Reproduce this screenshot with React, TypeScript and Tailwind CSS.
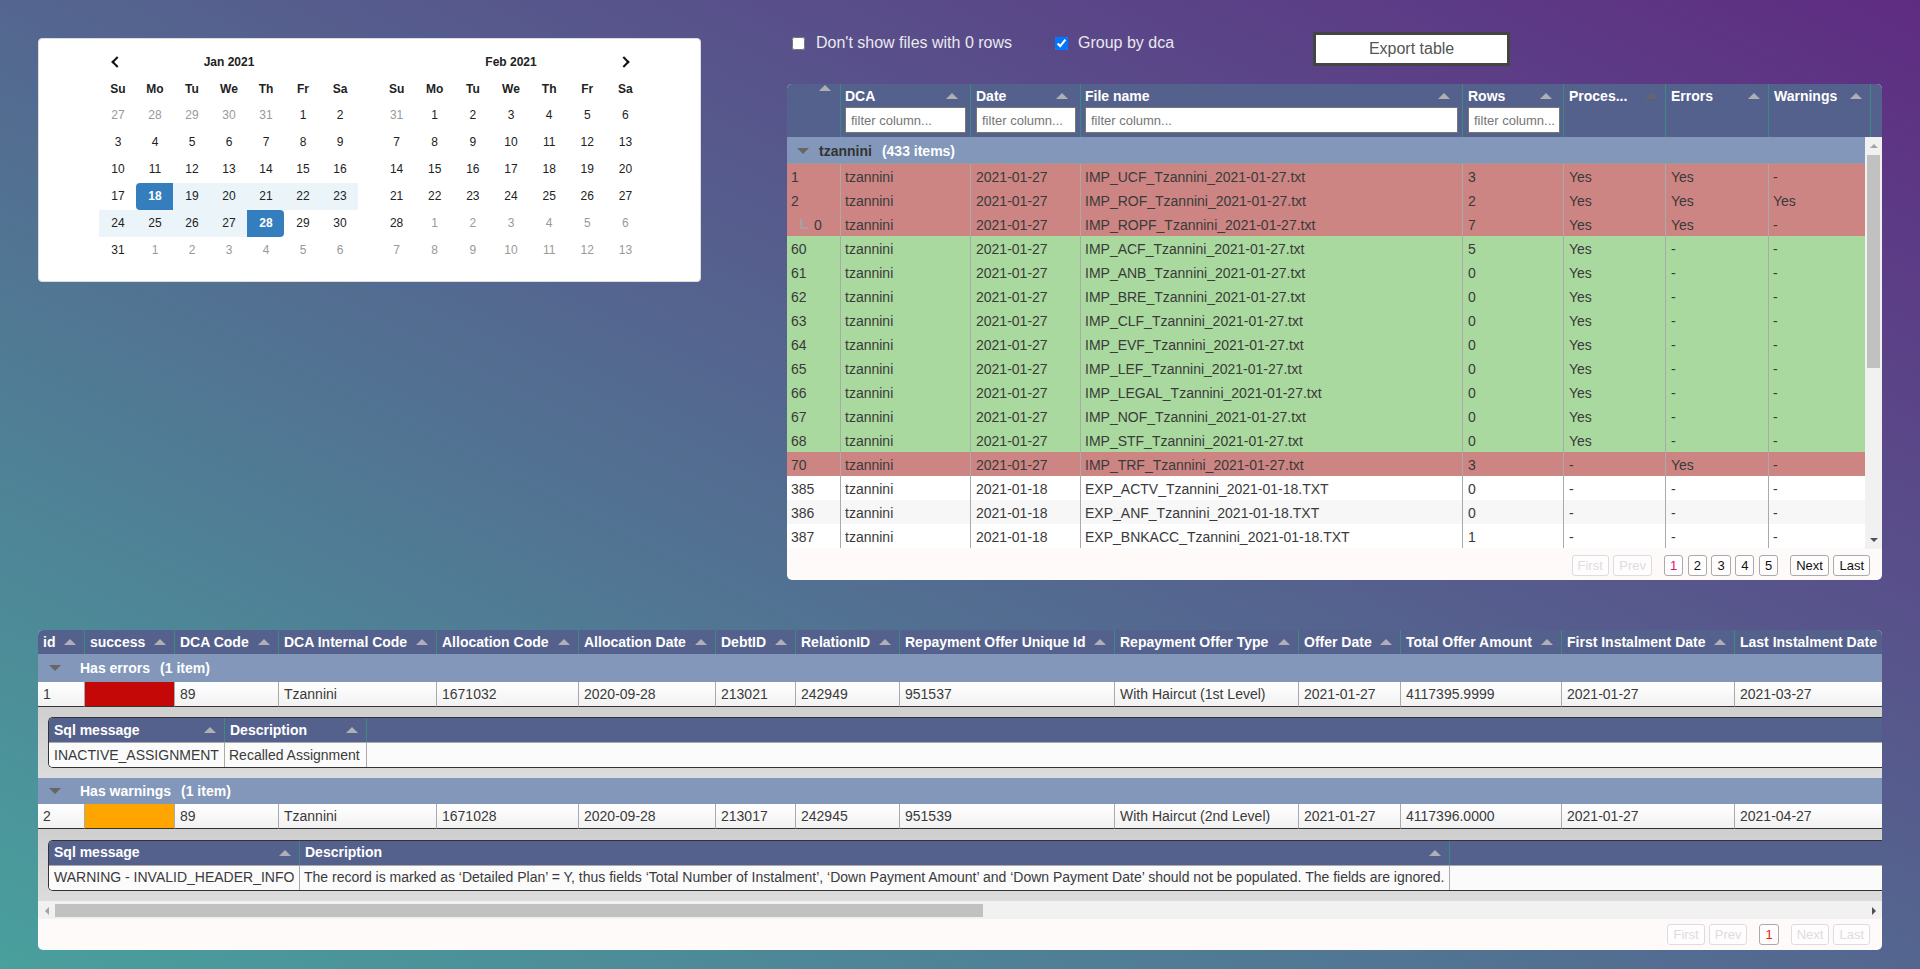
import type { ReactNode } from 'react'

const janDays = [
  [27, 28, 29, 30, 31, 1, 2],
  [3, 4, 5, 6, 7, 8, 9],
  [10, 11, 12, 13, 14, 15, 16],
  [17, 18, 19, 20, 21, 22, 23],
  [24, 25, 26, 27, 28, 29, 30],
  [31, 1, 2, 3, 4, 5, 6],
]

const febDays = [
  [31, 1, 2, 3, 4, 5, 6],
  [7, 8, 9, 10, 11, 12, 13],
  [14, 15, 16, 17, 18, 19, 20],
  [21, 22, 23, 24, 25, 26, 27],
  [28, 1, 2, 3, 4, 5, 6],
  [7, 8, 9, 10, 11, 12, 13],
]

const weekdays = ['Su', 'Mo', 'Tu', 'We', 'Th', 'Fr', 'Sa']

type FileRow = {
  id: string
  date: string
  file: string
  rows: string
  processed: string
  errors: string
  warnings: string
  tone: 'red' | 'green' | 'white' | 'grey'
  child?: boolean
}

const fileRows: FileRow[] = [
  { id: '1', date: '2021-01-27', file: 'IMP_UCF_Tzannini_2021-01-27.txt', rows: '3', processed: 'Yes', errors: 'Yes', warnings: '-', tone: 'red' },
  { id: '2', date: '2021-01-27', file: 'IMP_ROF_Tzannini_2021-01-27.txt', rows: '2', processed: 'Yes', errors: 'Yes', warnings: 'Yes', tone: 'red' },
  { id: '0', date: '2021-01-27', file: 'IMP_ROPF_Tzannini_2021-01-27.txt', rows: '7', processed: 'Yes', errors: 'Yes', warnings: '-', tone: 'red', child: true },
  { id: '60', date: '2021-01-27', file: 'IMP_ACF_Tzannini_2021-01-27.txt', rows: '5', processed: 'Yes', errors: '-', warnings: '-', tone: 'green' },
  { id: '61', date: '2021-01-27', file: 'IMP_ANB_Tzannini_2021-01-27.txt', rows: '0', processed: 'Yes', errors: '-', warnings: '-', tone: 'green' },
  { id: '62', date: '2021-01-27', file: 'IMP_BRE_Tzannini_2021-01-27.txt', rows: '0', processed: 'Yes', errors: '-', warnings: '-', tone: 'green' },
  { id: '63', date: '2021-01-27', file: 'IMP_CLF_Tzannini_2021-01-27.txt', rows: '0', processed: 'Yes', errors: '-', warnings: '-', tone: 'green' },
  { id: '64', date: '2021-01-27', file: 'IMP_EVF_Tzannini_2021-01-27.txt', rows: '0', processed: 'Yes', errors: '-', warnings: '-', tone: 'green' },
  { id: '65', date: '2021-01-27', file: 'IMP_LEF_Tzannini_2021-01-27.txt', rows: '0', processed: 'Yes', errors: '-', warnings: '-', tone: 'green' },
  { id: '66', date: '2021-01-27', file: 'IMP_LEGAL_Tzannini_2021-01-27.txt', rows: '0', processed: 'Yes', errors: '-', warnings: '-', tone: 'green' },
  { id: '67', date: '2021-01-27', file: 'IMP_NOF_Tzannini_2021-01-27.txt', rows: '0', processed: 'Yes', errors: '-', warnings: '-', tone: 'green' },
  { id: '68', date: '2021-01-27', file: 'IMP_STF_Tzannini_2021-01-27.txt', rows: '0', processed: 'Yes', errors: '-', warnings: '-', tone: 'green' },
  { id: '70', date: '2021-01-27', file: 'IMP_TRF_Tzannini_2021-01-27.txt', rows: '3', processed: '-', errors: 'Yes', warnings: '-', tone: 'red' },
  { id: '385', date: '2021-01-18', file: 'EXP_ACTV_Tzannini_2021-01-18.TXT', rows: '0', processed: '-', errors: '-', warnings: '-', tone: 'white' },
  { id: '386', date: '2021-01-18', file: 'EXP_ANF_Tzannini_2021-01-18.TXT', rows: '0', processed: '-', errors: '-', warnings: '-', tone: 'grey' },
  { id: '387', date: '2021-01-18', file: 'EXP_BNKACC_Tzannini_2021-01-18.TXT', rows: '1', processed: '-', errors: '-', warnings: '-', tone: 'white' },
]

const toneClass = {
  red: 'bg-[#cc8583]',
  green: 'bg-[#a9d99e]',
  white: 'bg-white',
  grey: 'bg-[#f7f7f7]',
}

const offerHeads = [
  'id',
  'success',
  'DCA Code',
  'DCA Internal Code',
  'Allocation Code',
  'Allocation Date',
  'DebtID',
  'RelationID',
  'Repayment Offer Unique Id',
  'Repayment Offer Type',
  'Offer Date',
  'Total Offer Amount',
  'First Instalment Date',
  'Last Instalment Date',
]

const errorRow = ['89', 'Tzannini', '1671032', '2020-09-28', '213021', '242949', '951537', 'With Haircut (1st Level)', '2021-01-27', '4117395.9999', '2021-01-27', '2021-03-27']
const warningRow = ['89', 'Tzannini', '1671028', '2020-09-28', '213017', '242945', '951539', 'With Haircut (2nd Level)', '2021-01-27', '4117396.0000', '2021-01-27', '2021-04-27']

function SortUp({ dark }: { dark?: boolean }) {
  return (
    <span
      className={`block w-0 h-0 shrink-0 border-x-[6px] border-x-transparent border-b-[6px] ${dark ? 'border-b-[#666666]' : 'border-b-[#aeb0b4]'}`}
    />
  )
}

function CollapseArrow() {
  return <span className="block w-0 h-0 shrink-0 border-x-[6px] border-x-transparent border-t-[6px] border-t-[#666666]" />
}

function MonthGrid({ days, title, range, className }: { days: number[][]; title: string; range?: boolean; className: string }) {
  return (
    <div className={`grid grid-cols-7 auto-rows-[27px] items-center text-center text-[12px] text-[#222222] ${className}`}>
      <div className="flex justify-center">
        {range && <span className="block w-[8px] h-[8px] ml-[-2px] border-l-2 border-b-2 border-[#111111] rotate-45" />}
      </div>
      <div className="col-span-5 font-bold pl-[1px]">{title}</div>
      <div className="flex justify-center">
        {!range && <span className="block w-[8px] h-[8px] ml-[-2px] border-r-2 border-t-2 border-[#111111] rotate-45" />}
      </div>
      {weekdays.map((d) => (
        <div key={d} className="font-bold pl-[1px]">{d}</div>
      ))}
      {days.flatMap((week, w) =>
        week.map((d, i) => {
          const inMonth = w === 0 ? d < 20 : w >= 4 ? d > 20 : true
          let cell = inMonth ? '' : 'text-[#999999]'
          if (range && w === 3 && i === 1) cell = 'bg-[#357ebd] text-white font-bold rounded-l-[4px]'
          else if (range && w === 3 && i > 1) cell = 'bg-[#ebf4f8]'
          else if (range && w === 4 && i < 4) cell = 'bg-[#ebf4f8]'
          else if (range && w === 4 && i === 4) cell = 'bg-[#357ebd] text-white font-bold rounded-r-[4px]'
          return (
            <div key={`${w}-${i}`} className={`h-[27px] leading-[27px] pl-[1px] ${cell}`}>
              {d}
            </div>
          )
        }),
      )}
    </div>
  )
}

function FilterHead({ label, className }: { label: string; className: string }) {
  return (
    <th className={`p-0 align-top text-left font-bold border-r border-r-[#3a8a80] ${className}`}>
      <div className="flex items-center justify-between h-[23px] pt-[1px] pr-[8px]">
        <span className="whitespace-nowrap">{label}</span>
        <SortUp />
      </div>
      <input
        placeholder="filter column..."
        className="block w-full h-[26px] bg-white border border-[#777777] pl-[5px] pr-[2px] text-[13px] font-normal text-[#333333] placeholder:text-[#757575] text-ellipsis"
      />
    </th>
  )
}

function PlainHead({ label, dark }: { label: string; dark?: boolean }) {
  return (
    <th className="p-0 pl-[5px] align-top text-left font-bold border-r border-r-[#3a8a80]">
      <div className="flex items-center justify-between h-[23px] pt-[1px] pr-[8px]">
        <span className="whitespace-nowrap">{label}</span>
        <SortUp dark={dark} />
      </div>
    </th>
  )
}

function Td({ children, wide }: { children?: ReactNode; wide?: boolean }) {
  return (
    <td className={`h-[24px] p-0 pt-[2px] border-r border-r-[#aaaaaa] whitespace-nowrap overflow-hidden ${wide ? 'pl-[5px]' : 'pl-[4px]'}`}>
      {children}
    </td>
  )
}

function PageButton({ label, state }: { label: string; state?: 'off' | 'current' | 'currentRed' }) {
  const look =
    state === 'off'
      ? 'border-[#dddddd] text-[#dddddd]'
      : state === 'current'
        ? 'border-[#aaaaaa] text-[#e0107a]'
        : state === 'currentRed'
          ? 'border-[#aaaaaa] text-[#e8200c]'
          : 'border-[#aaaaaa] text-[#111111]'
  return (
    <button className={`h-[21px] px-[5px] border rounded-[3px] text-[13px] leading-none bg-[#fffdfd] ${look}`}>{label}</button>
  )
}

function OfferCell({ children, className = '' }: { children?: ReactNode; className?: string }) {
  return (
    <td className={`h-[25px] p-0 px-[5px] border-r border-r-[#aaaaaa] border-b border-b-[#333333] whitespace-nowrap ${className}`}>
      {children}
    </td>
  )
}

function OfferHead({ label }: { label: string }) {
  return (
    <th className="h-[24px] p-0 pl-[5px] pr-[8px] text-left font-bold text-white border-r border-r-[#3a8a80]">
      <div className="flex items-center justify-between">
        <span className="whitespace-nowrap">{label}</span>
        <SortUp />
      </div>
    </th>
  )
}

function SubTable({ cols, first, second }: { cols: ReactNode; first: string; second: string }) {
  return (
    <div className="border-y border-l border-[#333333] rounded-l-[5px] overflow-hidden">
      <table className="w-full table-fixed border-separate border-spacing-0">
        {cols}
        <thead>
          <tr className="bg-[#55618d]">
            <OfferHead label="Sql message" />
            <OfferHead label="Description" />
            <th className="h-[24px] p-0" />
          </tr>
        </thead>
        <tbody>
          <tr className="bg-[#fbfbfb]">
            <td className="h-[25px] p-0 pl-[5px] border-t border-t-[#aaaaaa] border-r border-r-[#aaaaaa] whitespace-nowrap">{first}</td>
            <td className="h-[25px] p-0 pl-[4px] border-t border-t-[#aaaaaa] border-r border-r-[#aaaaaa] whitespace-nowrap">{second}</td>
            <td className="h-[25px] p-0 border-t border-t-[#aaaaaa]" />
          </tr>
        </tbody>
      </table>
    </div>
  )
}

function GroupRow({ label, className }: { label: string; className: string }) {
  return (
    <tr className="bg-[#8297b9]">
      <td colSpan={14} className={`p-0 pl-[11px] ${className}`}>
        <div className="flex items-center font-bold text-white">
          <CollapseArrow />
          <span className="ml-[19px]">{label}</span>
          <span className="ml-[10px]">(1 item)</span>
        </div>
      </td>
    </tr>
  )
}

function OfferRow({ id, swatch, values }: { id: string; swatch: string; values: string[] }) {
  return (
    <tr className="bg-[linear-gradient(#ffffff,#f1f1f1)]">
      <OfferCell>{id}</OfferCell>
      <OfferCell className={swatch} />
      {values.map((v, i) => (
        <OfferCell key={i}>{v}</OfferCell>
      ))}
    </tr>
  )
}

function NestedRow({ className, children }: { className: string; children: ReactNode }) {
  return (
    <tr className="bg-[linear-gradient(#cfcfcf,#dcdcdc)]">
      <td colSpan={14} className={`p-0 pl-[10px] ${className}`}>
        {children}
      </td>
    </tr>
  )
}

export default function App() {
  return (
    <div className="w-[1920px] h-[969px] overflow-hidden pt-[32px] bg-[linear-gradient(to_top_right,#49a09d,#5f2c82)] font-['Liberation_Sans',Arial,sans-serif] text-[14px] text-[#3a3a3a]">
      <div className="flex items-start">
        {/* Date range picker */}
        <div className="ml-[38px] mt-[6px] w-[663px] h-[244px] flex gap-[19px] bg-white rounded-[4px] pl-[60px] pt-[9px] border border-[#dddddd]">
          <MonthGrid days={janDays} title="Jan 2021" range className="w-[259px]" />
          <MonthGrid days={febDays} title="Feb 2021" className="w-[267px]" />
        </div>

        <div className="ml-[86px] w-[1095px]">
          {/* Controls */}
          <div className="flex items-center h-[34px] mb-[18px]">
            <input type="checkbox" readOnly className="ml-[5px] mb-[12px] w-[13px] h-[13px]" />
            <span className="ml-[11px] mb-[12px] text-[16px] text-[#e9e9ee]">Don't show files with 0 rows</span>
            <input type="checkbox" checked readOnly className="ml-[43px] mb-[12px] w-[13px] h-[13px]" />
            <span className="ml-[10px] mb-[12px] text-[16px] text-[#e9e9ee]">Group by dca</span>
            <button className="ml-[139px] w-[197px] h-[34px] bg-white border-[3px] border-[#444444] text-[16px] text-[#555555]">
              Export table
            </button>
          </div>

          {/* Files table */}
          <div className="h-[496px] rounded-[5px] overflow-hidden bg-[#fffafa]">
            <table className="w-[1095px] table-fixed border-separate border-spacing-0 text-white">
              <colgroup>
                <col className="w-[54px]" />
                <col className="w-[130px]" />
                <col className="w-[110px]" />
                <col className="w-[382px]" />
                <col className="w-[101px]" />
                <col className="w-[102px]" />
                <col className="w-[103px]" />
                <col className="w-[102px]" />
                <col />
              </colgroup>
              <thead>
                <tr className="bg-[#55618d] h-[53px]">
                  <th className="p-0 align-top border-r border-r-[#3a8a80]">
                    <div className="flex justify-end pr-[9px] pt-[1px]">
                      <SortUp />
                    </div>
                  </th>
                  <FilterHead label="DCA" className="pl-[4px] pr-[4px]" />
                  <FilterHead label="Date" className="pl-[5px] pr-[4px]" />
                  <FilterHead label="File name" className="pl-[4px] pr-[4px]" />
                  <FilterHead label="Rows" className="pl-[5px] pr-[3px]" />
                  <PlainHead label="Proces..." dark />
                  <PlainHead label="Errors" />
                  <PlainHead label="Warnings" />
                  <th className="p-0" />
                </tr>
              </thead>
            </table>
            <div className="flex h-[412px]">
              <table className="w-[1078px] h-fit table-fixed border-separate border-spacing-0">
                <colgroup>
                  <col className="w-[54px]" />
                  <col className="w-[130px]" />
                  <col className="w-[110px]" />
                  <col className="w-[382px]" />
                  <col className="w-[101px]" />
                  <col className="w-[102px]" />
                  <col className="w-[103px]" />
                  <col />
                </colgroup>
                <tbody>
                  <tr className="bg-[#8297b9]">
                    <td colSpan={8} className="h-[27px] p-0 pt-[2px] pl-[10px] border-b border-b-[#9a9a9a]">
                      <div className="flex items-center font-bold">
                        <CollapseArrow />
                        <span className="ml-[10px] text-[#333333]">tzannini</span>
                        <span className="ml-[10px] text-white">(433 items)</span>
                      </div>
                    </td>
                  </tr>
                  {fileRows.map((r) => (
                    <tr key={r.id} className={toneClass[r.tone]}>
                      <Td>
                        {r.child ? (
                          <span className="flex items-center pl-[9px]">
                            <span className="block w-[8px] h-[10px] mb-[3px] border-l-2 border-b-2 border-[#a6a3a8]" />
                            <span className="ml-[6px]">{r.id}</span>
                          </span>
                        ) : (
                          r.id
                        )}
                      </Td>
                      <Td>tzannini</Td>
                      <Td wide>{r.date}</Td>
                      <Td>{r.file}</Td>
                      <Td wide>{r.rows}</Td>
                      <Td wide>{r.processed}</Td>
                      <Td wide>{r.errors}</Td>
                      <td className="h-[24px] p-0 pt-[2px] px-[4px]">{r.warnings}</td>
                    </tr>
                  ))}
                </tbody>
              </table>
              <div className="w-[17px] bg-[#f1f1f1] flex flex-col items-center">
                <div className="h-[18px] flex items-center justify-center">
                  <span className="block w-0 h-0 border-x-[4px] border-x-transparent border-b-[4px] border-b-[#a3a3a3]" />
                </div>
                <div className="w-[13px] h-[213px] bg-[#c1c1c1]" />
                <div className="mt-auto h-[18px] flex items-center justify-center">
                  <span className="block w-0 h-0 border-x-[4px] border-x-transparent border-t-[4px] border-t-[#505050]" />
                </div>
              </div>
            </div>
            <div className="h-[31px] flex items-center justify-end gap-[4.5px] pr-[12px] pt-[1px]">
              <PageButton label="First" state="off" />
              <PageButton label="Prev" state="off" />
              <span className="w-[3px]" />
              <PageButton label="1" state="current" />
              <PageButton label="2" />
              <PageButton label="3" />
              <PageButton label="4" />
              <PageButton label="5" />
              <span className="w-[3px]" />
              <PageButton label="Next" />
              <PageButton label="Last" />
            </div>
          </div>
        </div>
      </div>

      {/* Offers table */}
      <div className="ml-[38px] mt-[50px] w-[1844px] h-[320px] rounded-[5px] overflow-hidden bg-[#fffafa]">
        <div className="h-[271px] overflow-hidden">
          <table className="w-[1867px] table-fixed border-separate border-spacing-0">
            <colgroup>
              <col className="w-[47px]" />
              <col className="w-[90px]" />
              <col className="w-[104px]" />
              <col className="w-[158px]" />
              <col className="w-[142px]" />
              <col className="w-[137px]" />
              <col className="w-[80px]" />
              <col className="w-[104px]" />
              <col className="w-[215px]" />
              <col className="w-[184px]" />
              <col className="w-[102px]" />
              <col className="w-[161px]" />
              <col className="w-[173px]" />
              <col className="w-[170px]" />
            </colgroup>
            <thead>
              <tr className="bg-[#55618d]">
                {offerHeads.map((h) => (
                  <OfferHead key={h} label={h} />
                ))}
              </tr>
            </thead>
            <tbody>
              <GroupRow label="Has errors" className="h-[28px]" />
              <OfferRow id="1" swatch="bg-[#c40808]" values={errorRow} />
              <NestedRow className="h-[71px]">
                <SubTable
                  cols={
                    <colgroup>
                      <col className="w-[176px]" />
                      <col className="w-[142px]" />
                      <col />
                    </colgroup>
                  }
                  first="INACTIVE_ASSIGNMENT"
                  second="Recalled Assignment"
                />
              </NestedRow>
              <GroupRow label="Has warnings" className="h-[26px]" />
              <OfferRow id="2" swatch="bg-[#ffa500]" values={warningRow} />
              <NestedRow className="h-[72px]">
                <SubTable
                  cols={
                    <colgroup>
                      <col className="w-[251px]" />
                      <col className="w-[1150px]" />
                      <col />
                    </colgroup>
                  }
                  first="WARNING - INVALID_HEADER_INFO"
                  second="The record is marked as ‘Detailed Plan’ = Y, thus fields ‘Total Number of Instalment’, ‘Down Payment Amount’ and ‘Down Payment Date’ should not be populated. The fields are ignored."
                />
              </NestedRow>
            </tbody>
          </table>
        </div>
        {/* Horizontal scrollbar */}
        <div className="h-[18px] bg-[#f1f1f1] flex items-end pb-[2px]">
          <div className="w-[17px] h-[13px] flex items-center justify-center">
            <span className="block w-0 h-0 border-y-[4px] border-y-transparent border-r-[4px] border-r-[#a3a3a3]" />
          </div>
          <div className="w-[928px] h-[13px] bg-[#c1c1c1]" />
          <div className="ml-auto w-[17px] h-[13px] flex items-center justify-center">
            <span className="block w-0 h-0 border-y-[4px] border-y-transparent border-l-[4px] border-l-[#505050]" />
          </div>
        </div>
        <div className="h-[31px] flex items-center justify-end gap-[4px] pr-[12px]">
          <PageButton label="First" state="off" />
          <PageButton label="Prev" state="off" />
          <span className="w-[4px]" />
          <PageButton label="1" state="currentRed" />
          <span className="w-[4px]" />
          <PageButton label="Next" state="off" />
          <PageButton label="Last" state="off" />
        </div>
      </div>
    </div>
  )
}
